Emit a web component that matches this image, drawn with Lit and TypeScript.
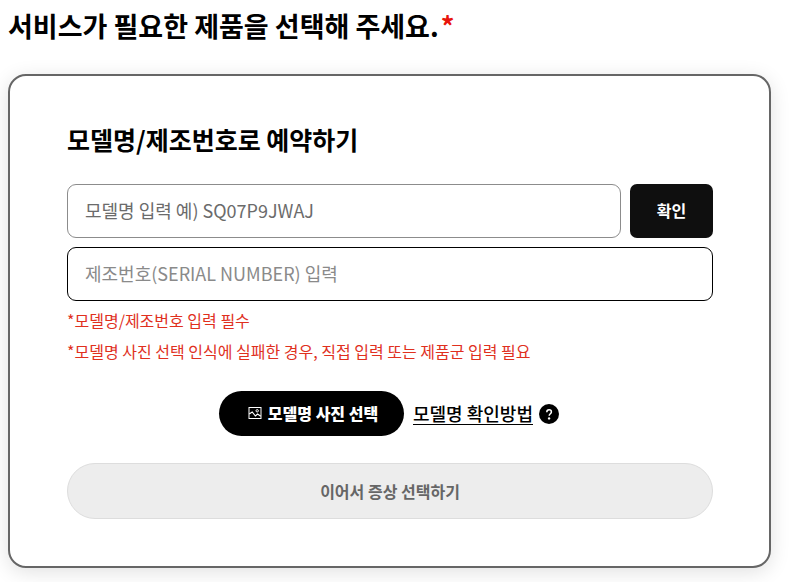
import { LitElement, html, css, svg } from "lit";
import { customElement } from "lit/decorators.js";

const pictureIcon = svg`
  <svg class="picture" viewBox="0 0 14 14" aria-hidden="true">
    <rect x="1" y="1.5" width="12" height="11" fill="none" stroke="currentColor"/>
    <circle cx="9.2" cy="4.8" r="1.2" fill="none" stroke="currentColor"/>
    <path d="M1.2 8 4.2 6l3.2 4 2.2-2 3.2 2.2" fill="none" stroke="currentColor" stroke-width="1.2"/>
  </svg>`;

@customElement("app-root")
export class AppRoot extends LitElement {
  static styles = css`
    :host {
      display: block;
      padding: 8px 26px 14px 8px;
      overflow: hidden;
      background: #fff;
      color: #000;
      font-family: "Noto Sans CJK KR", sans-serif;
    }
    * { box-sizing: border-box; }
    h1, h2, p { margin: 0; }
    h1 { font-size: 27px; line-height: 36px; font-weight: 700; }
    .required { margin-left: 2px; color: #e8140c; }
    .card {
      margin-top: 30px;
      padding: 46px 56px 47px 57px;
      border: 2px solid #666;
      border-radius: 18px;
      background: #fff;
      box-shadow: 0 4px 20px rgba(0, 0, 0, 0.12);
    }
    h2 { font-size: 25px; line-height: 34px; font-weight: 700; }
    .fields {
      display: grid;
      grid-template-columns: 1fr 83px;
      gap: 9px;
      margin-top: 28px;
    }
    input {
      width: 100%;
      min-width: 0;
      height: 54px;
      padding: 0 17px 2px;
      border: 1px solid #8c8c8c;
      border-radius: 9px;
      background: #fff;
      color: #000;
      font: 400 18px "Noto Sans CJK KR", sans-serif;
    }
    input::placeholder { color: #6b6b6b; opacity: 1; }
    .serial { grid-column: 1 / -1; border-color: #000; }
    .serial::placeholder { color: #8a8a8a; }
    button { padding: 0 0 2px; border: 0; font-family: inherit; }
    .confirm {
      border-radius: 7px;
      background: #0f0f0f;
      color: #fff;
      font-size: 16px;
      font-weight: 700;
    }
    .notes { margin-top: 4px; color: #e0301e; font-size: 16px; line-height: 31px; }
    .actions {
      display: flex;
      align-items: center;
      justify-content: center;
      gap: 9px;
      margin-top: 24px;
    }
    .photo {
      display: flex;
      align-items: center;
      justify-content: center;
      gap: 6px;
      width: 185px;
      height: 45px;
      padding-left: 3px;
      border-radius: 23px;
      background: #000;
      color: #fff;
      font-size: 16px;
      font-weight: 900;
    }
    .picture { width: 14px; height: 14px; }
    .guide {
      display: flex;
      align-items: center;
      gap: 6px;
      padding-right: 2px;
      color: #000;
      font-size: 18px;
      line-height: 22px;
      font-weight: 500;
      text-decoration: none;
    }
    .guide span { border-bottom: 1px solid #000; }
    .help { width: 20px; height: 20px; }
    .next {
      width: 100%;
      height: 56px;
      margin-top: 27px;
      padding: 0;
      border: 1px solid #ddd;
      border-radius: 28px;
      background: #ededed;
      color: #666;
      font-size: 16px;
      font-weight: 700;
    }
  `;

  render() {
    return html`
      <h1>서비스가 필요한 제품을 선택해 주세요.<span class="required">*</span></h1>
      <form class="card" @submit=${(e: Event) => e.preventDefault()}>
        <h2>모델명/제조번호로 예약하기</h2>
        <div class="fields">
          <input type="text" aria-label="모델명" placeholder="모델명 입력 예) SQ07P9JWAJ">
          <button class="confirm" type="button">확인</button>
          <input class="serial" type="text" aria-label="제조번호" placeholder="제조번호(SERIAL NUMBER) 입력">
        </div>
        <div class="notes">
          <p>*모델명/제조번호 입력 필수</p>
          <p>*모델명 사진 선택 인식에 실패한 경우, 직접 입력 또는 제품군 입력 필요</p>
        </div>
        <div class="actions">
          <button class="photo" type="button">${pictureIcon}모델명 사진 선택</button>
          <a class="guide" href="#guide">
            <span>모델명 확인방법</span>
            <svg class="help" viewBox="0 0 20 20" aria-hidden="true">
              <circle cx="10" cy="10" r="10" fill="#000"/>
              <path d="M7.8 8.2c0-1.4.9-2.4 2.3-2.4s2.3.9 2.3 2.1c0 1.7-2.2 1.9-2.2 3.8" fill="none" stroke="#fff" stroke-width="1.5"/>
              <circle cx="10.1" cy="14.4" r="1.2" fill="#fff"/>
            </svg>
          </a>
        </div>
        <button class="next" type="submit" disabled>이어서 증상 선택하기</button>
      </form>
    `;
  }
}
